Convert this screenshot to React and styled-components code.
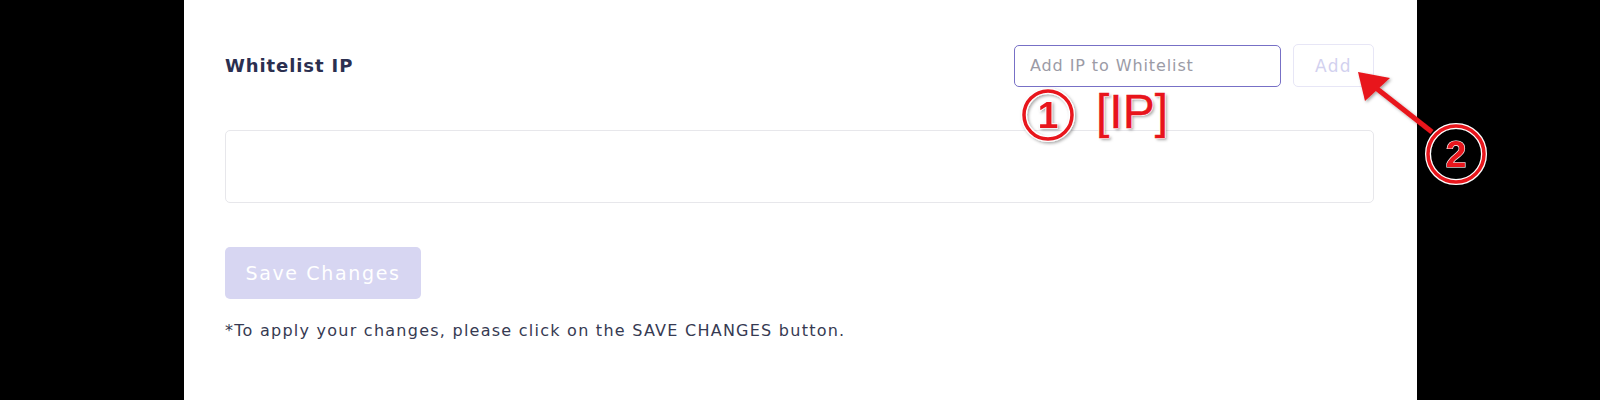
import React from 'react'
import styled, { createGlobalStyle } from 'styled-components'

const GlobalStyle = createGlobalStyle`
  html, body {
    margin: 0;
    padding: 0;
    background: #000;
  }
  * { box-sizing: border-box; }
`

const FONT = `"DejaVu Sans", "Noto Sans", sans-serif`

const Page = styled.div`
  position: relative;
  width: 1600px;
  height: 400px;
  background: #000;
`

const Panel = styled.section`
  margin-left: 184px;
  width: 1233px;
  height: 400px;
  background: #fff;
  padding: 44px 43px 0 41px;
  font-family: ${FONT};
`

const Header = styled.div`
  display: flex;
  align-items: center;
  justify-content: space-between;
  height: 43px;
`

const Title = styled.h2`
  margin: 0;
  font-size: 18px;
  font-weight: 700;
  letter-spacing: 0.9px;
  color: #2b2f50;
`

const Controls = styled.div`
  display: flex;
  align-items: center;
  gap: 12px;
`

const IpInput = styled.input`
  width: 267px;
  height: 42px;
  border: 1px solid #7770c6;
  border-radius: 5px;
  padding: 0 15px;
  font-family: ${FONT};
  font-size: 16px;
  letter-spacing: 0.9px;
  color: #333;
  outline: none;
  &::placeholder { color: #9b9ba6; }
`

const AddButton = styled.button`
  width: 81px;
  height: 43px;
  border: 1px solid #e7e6f6;
  border-radius: 5px;
  background: #fff;
  font-family: ${FONT};
  font-size: 17px;
  letter-spacing: 1.3px;
  color: #d2d1ef;
`

const IpList = styled.div`
  margin-top: 43px;
  height: 73px;
  border: 1px solid #e7e7eb;
  border-radius: 5px;
`

const SaveButton = styled.button`
  display: block;
  margin-top: 44px;
  width: 196px;
  height: 52px;
  border: none;
  border-radius: 5px;
  background: #d7d6f2;
  color: #fff;
  font-family: ${FONT};
  font-size: 19px;
  letter-spacing: 1.65px;
`

const Note = styled.p`
  margin: 20px 0 0;
  font-size: 16px;
  letter-spacing: 1.25px;
  line-height: 24px;
  color: #363a52;
`

/* red callouts drawn over the screenshot */
const Overlay = styled.svg`
  position: absolute;
  left: 0;
  top: 0;
  pointer-events: none;
`

const Tag = styled.div`
  position: absolute;
  left: ${p => p.x}px;
  top: ${p => p.y}px;
  font-family: "Liberation Sans", Arial, sans-serif;
  font-size: 48px;
  line-height: 1;
  color: #e8141b;
  -webkit-text-stroke: 0.4px #e8141b;
  text-shadow: 1px 0 0 #fff, -1px 0 0 #fff, 0 1px 0 #fff, 0 -1px 0 #fff,
    2px 2px 3px rgba(0, 0, 0, 0.35);
`

const Circled = ({ cx, cy, r, n }) => (
  <g>
    <circle cx={cx} cy={cy} r={r} fill="none" stroke="#fff" strokeWidth="6" />
    <circle cx={cx} cy={cy} r={r} fill="none" stroke="#e8141b" strokeWidth="3.5" />
    <text
      x={cx}
      y={cy + 13}
      textAnchor="middle"
      fontFamily="Liberation Sans, Arial, sans-serif"
      fontWeight="700"
      fontSize="37"
      fill="#e8141b"
      stroke="#fff"
      strokeWidth="1.2"
      paintOrder="stroke"
    >
      {n}
    </text>
  </g>
)

const Callouts = () => (
  <Overlay width="1600" height="400" viewBox="0 0 1600 400">
    <defs>
      <filter id="soft" x="-20%" y="-20%" width="140%" height="140%">
        <feDropShadow dx="1.5" dy="1.5" stdDeviation="1.5" floodColor="#000" floodOpacity="0.35" />
      </filter>
    </defs>
    <g filter="url(#soft)">
      <line x1="1432" y1="132" x2="1376" y2="88" stroke="#e8141b" strokeWidth="5" />
      <polygon points="1358,72 1390,78 1365,101" fill="#e8141b" />
      <Circled cx={1048} cy={115} r={24} n="1" />
      <Circled cx={1456} cy={154} r={28} n="2" />
    </g>
  </Overlay>
)

const App = () => {
  return (
    <Page>
      <GlobalStyle />
      <Panel>
        <Header>
          <Title>Whitelist IP</Title>
          <Controls>
            <IpInput placeholder="Add IP to Whitelist" />
            <AddButton>Add</AddButton>
          </Controls>
        </Header>
        <IpList />
        <SaveButton>Save Changes</SaveButton>
        <Note>*To apply your changes, please click on the SAVE CHANGES button.</Note>
      </Panel>
      <Callouts />
      <Tag x={1096} y={88}>[IP]</Tag>
    </Page>
  )
}

export default App
